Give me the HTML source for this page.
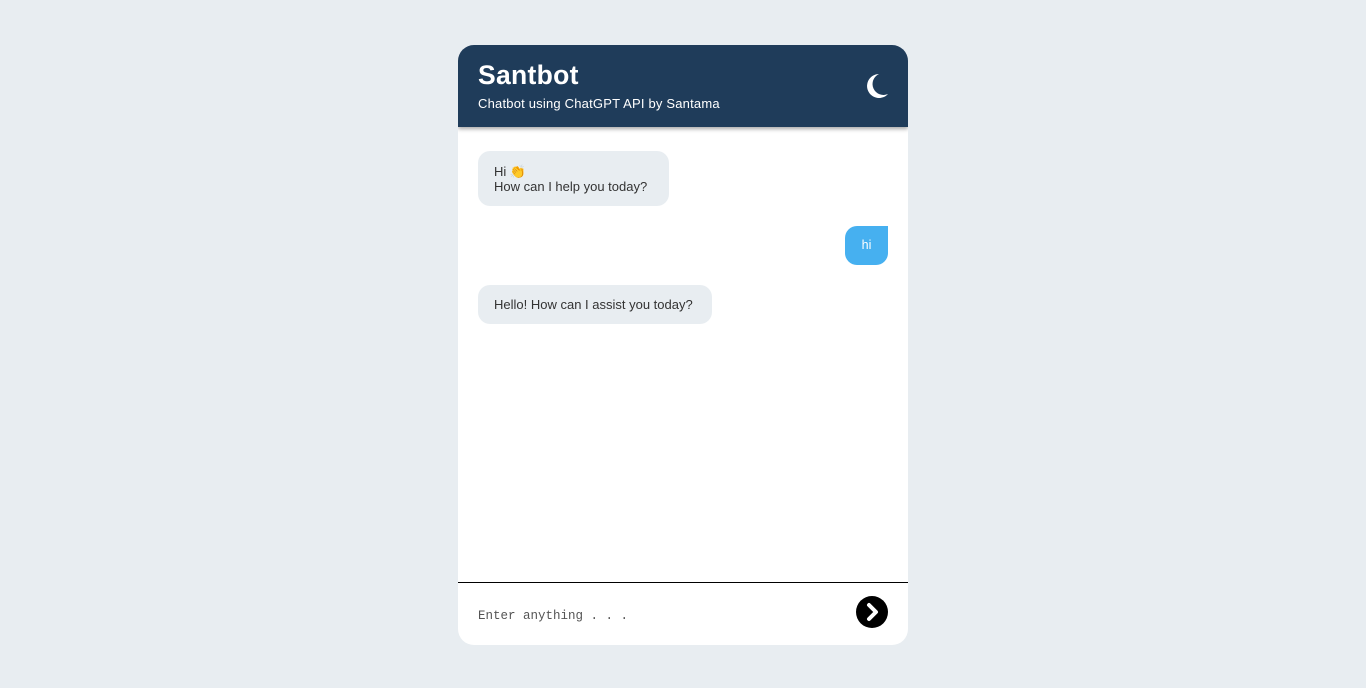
<!DOCTYPE html>
<html><head><meta charset="utf-8"><style>
*{box-sizing:border-box;margin:0;padding:0}
body{width:1366px;height:688px;background:#e8edf1;font-family:"Liberation Sans",sans-serif;position:relative;overflow:hidden}
.card{position:absolute;left:458px;top:45px;width:450px;height:600px;background:#fff;border-radius:16px;overflow:hidden}
.head{position:absolute;left:0;top:0;width:450px;height:82px;background:#1f3c5a;box-shadow:0 2px 4px rgba(0,0,0,.35);z-index:2}
.title{position:absolute;left:20px;top:15px;color:#fff;font-weight:bold;font-size:26.5px;letter-spacing:0.3px}
.sub{position:absolute;left:20px;top:51px;color:#fff;font-size:13px;letter-spacing:0.2px}
.moon{position:absolute;left:407px;top:28px}
.b{position:absolute;font-size:13px;color:#333;background:#e8edf1;border-radius:12px;padding:0 16px;line-height:15px}
.u{position:absolute;left:387px;top:181px;width:43px;height:39px;background:#46b0f0;color:#fff;border-radius:12px 0 12px 12px;font-size:12.5px;text-align:center;line-height:39px}
.line{position:absolute;left:0;top:537px;width:450px;height:1px;background:#000}
.ph{position:absolute;left:20px;top:564px;font-family:"Liberation Mono",monospace;font-size:12.5px;color:#555}
.send{position:absolute;left:398px;top:551px}
</style></head><body>
<div class="card">
<div class="head">
<div class="title">Santbot</div>
<div class="sub">Chatbot using ChatGPT API by Santama</div>
<svg class="moon" width="24" height="26" viewBox="0 0 24 26"><path d="M14 1 A12 12 0 1 0 23 21 A10 10 0 0 1 14 1Z" fill="#fff"/></svg>
</div>
<div class="b" style="left:20px;top:106px;width:191px;height:55px;padding-top:13px">Hi 👏<br>How can I help you today?</div>
<div class="u">hi</div>
<div class="b" style="left:20px;top:240px;width:234px;height:39px;line-height:40px">Hello! How can I assist you today?</div>
<div class="line"></div>
<div class="ph">Enter anything . . .</div>
<svg class="send" width="32" height="32" viewBox="0 0 32 32"><circle cx="16" cy="16" r="16" fill="#000"/><path d="M13 9 L20 16 L13 23" stroke="#fff" stroke-width="4" fill="none" stroke-linecap="round" stroke-linejoin="round"/></svg>
</div>
</body></html>
